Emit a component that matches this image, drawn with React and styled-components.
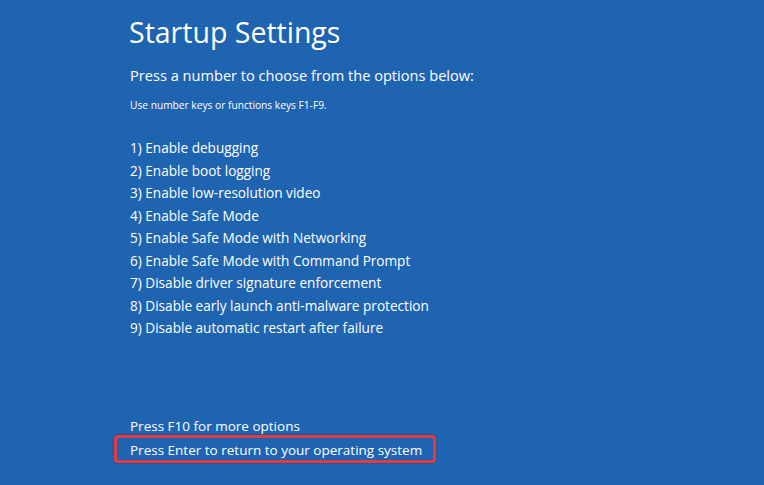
import React from "react";
import styled, { createGlobalStyle } from "styled-components";

const Global = createGlobalStyle`
  html, body { margin: 0; padding: 0; background: #1f64b1; }
  body { font-family: "Open Sans", "Noto Sans", sans-serif; color: #fff; }
`;

const Screen = styled.div`
  width: 764px;
  height: 485px;
  background: #1f64b1;
  box-sizing: border-box;
  padding: 12px 0 0 130px;
  display: flex;
  flex-direction: column;
  overflow: hidden;
`;

const Title = styled.h1`
  margin: 0 0 0 -1px;
  font-weight: 400;
  font-size: 28.5px;
  line-height: 40px;
`;

const Lead = styled.p`
  margin: 13px 0 0;
  font-size: 14.6px;
  line-height: 20px;
`;

const Hint = styled.p`
  margin: 13px 0 0;
  font-size: 10.2px;
  line-height: 14px;
`;

const Options = styled.ol`
  list-style: none;
  margin: 25px 0 0;
  padding: 0;
  display: flex;
  flex-direction: column;
`;

const Option = styled.li`
  font-size: 13.6px;
  line-height: 22.5px;
`;

const Footer = styled.div`
  margin-top: auto;
  margin-bottom: 23px;
  display: flex;
  flex-direction: column;
`;

const FooterLine = styled.div`
  font-size: 13.5px;
  line-height: 24px;
  position: relative;
`;

const Highlight = styled.span`
  position: absolute;
  left: -16px;
  top: -3px;
  width: 322px;
  height: 28px;
  border: 3px solid #e63a42;
  border-radius: 4px;
  box-sizing: border-box;
  box-shadow: 0 0 2px rgba(0, 0, 0, 0.35);
`;

const items = [
  "1) Enable debugging",
  "2) Enable boot logging",
  "3) Enable low-resolution video",
  "4) Enable Safe Mode",
  "5) Enable Safe Mode with Networking",
  "6) Enable Safe Mode with Command Prompt",
  "7) Disable driver signature enforcement",
  "8) Disable early launch anti-malware protection",
  "9) Disable automatic restart after failure",
];

export default function App() {
  return (
    <>
      <Global />
      <Screen>
        <Title>Startup Settings</Title>
        <Lead>Press a number to choose from the options below:</Lead>
        <Hint>Use number keys or functions keys F1-F9.</Hint>
        <Options>
          {items.map((t) => (
            <Option key={t}>{t}</Option>
          ))}
        </Options>
        <Footer>
          <FooterLine>Press F10 for more options</FooterLine>
          <FooterLine>
            <Highlight />
            Press Enter to return to your operating system
          </FooterLine>
        </Footer>
      </Screen>
    </>
  );
}
